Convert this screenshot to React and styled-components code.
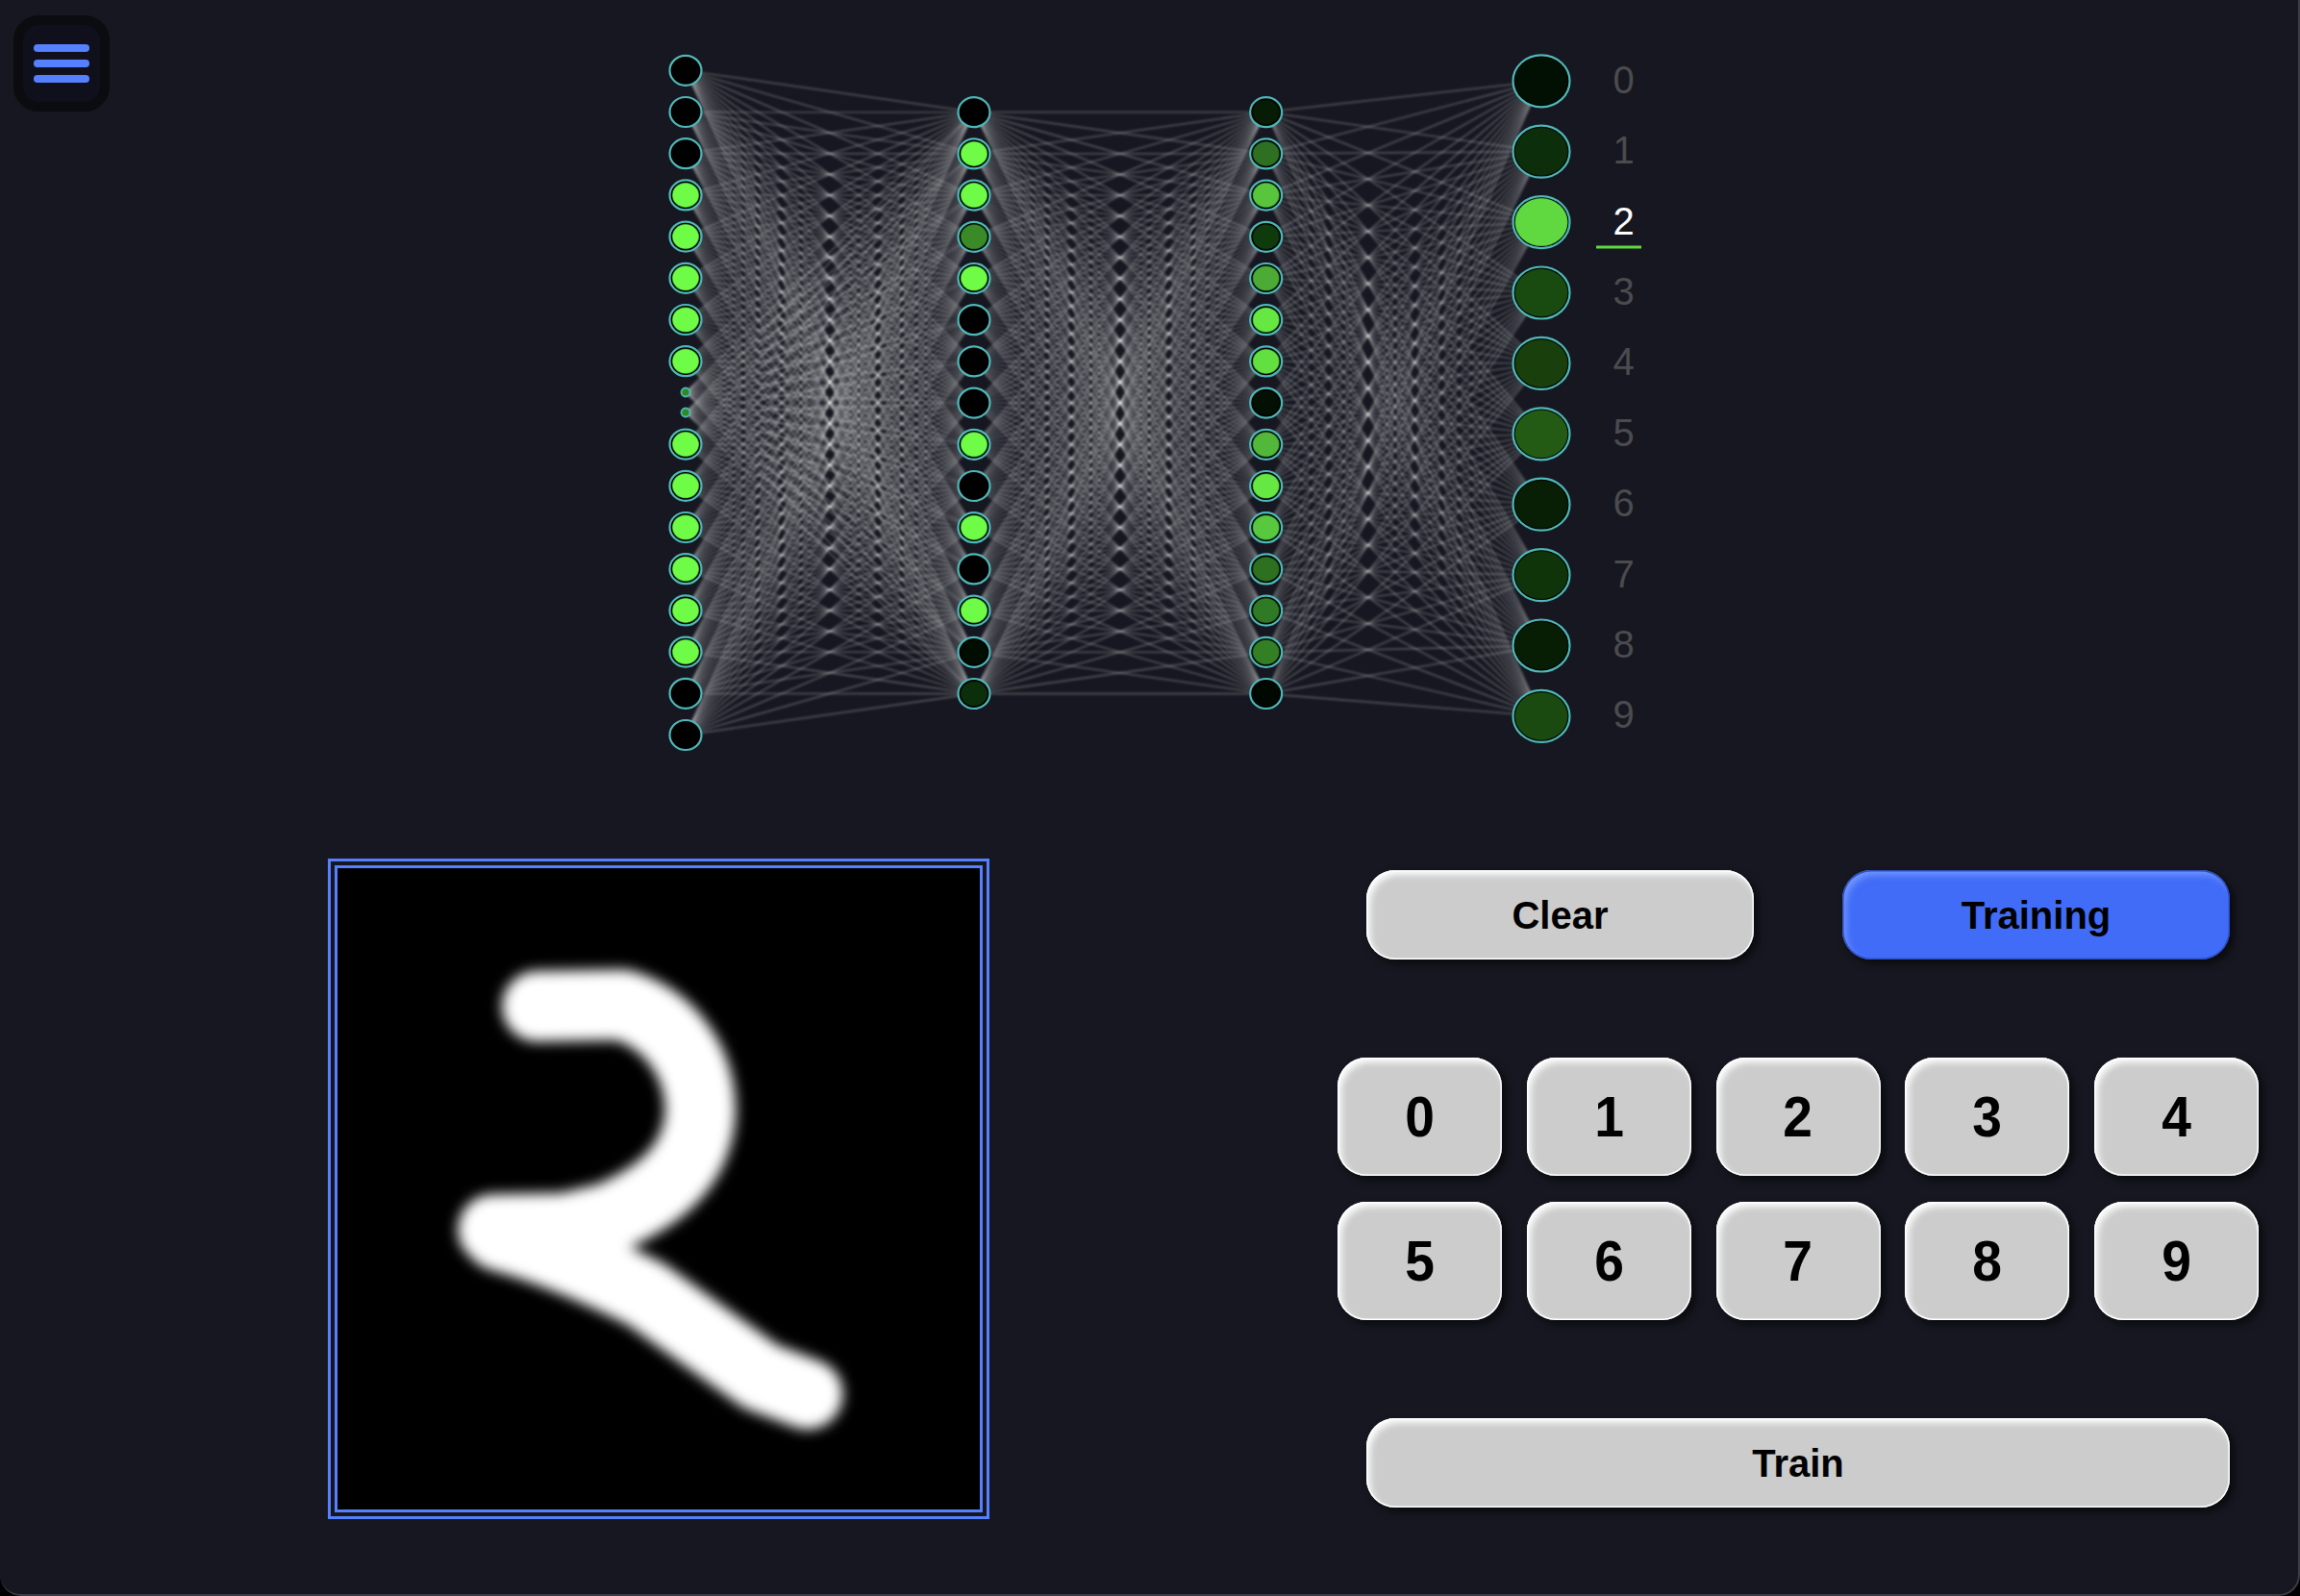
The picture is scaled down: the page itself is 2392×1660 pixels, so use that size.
import React from 'react';
import styled, { createGlobalStyle } from 'styled-components';

const GREEN = '#6ffc46';
const K = '#000000';

const inputColors = [K, K, K, GREEN, GREEN, GREEN, GREEN, GREEN, GREEN, GREEN, GREEN, GREEN, GREEN, GREEN, K, K];
const hiddenOne = [K, GREEN, GREEN, '#3a8a28', GREEN, K, K, K, GREEN, K, GREEN, K, GREEN, '#020d02', '#0b2f0a'];
const hiddenTwo = ['#071c05', '#2f6f22', '#58c53d', '#0f3a0c', '#4cab35', '#66e843', '#62e040', '#031003', '#52b83a', '#66e843', '#58c93e', '#2c7020', '#2f7a24', '#338024', '#010801'];
const outputColors = ['#021003', '#0d2e0b', '#60d940', '#194a10', '#183f0c', '#235b15', '#081f05', '#103409', '#071e04', '#1b4a10'];

const STEP = 43.2;
const inputNodes = inputColors.map((fill, i) => ({
  x: 713,
  y: 73.3 + (i < 8 ? i : i + 1) * STEP,
  fill,
}));
const hiddenOneNodes = hiddenOne.map((fill, i) => ({ x: 1013, y: 116.7 + i * STEP, fill }));
const hiddenTwoNodes = hiddenTwo.map((fill, i) => ({ x: 1316.7, y: 116.7 + i * STEP, fill }));
const outputNodes = outputColors.map((fill, i) => ({ x: 1603, y: 84.3 + i * 73.4, fill }));

const dotNodes = [408, 429].map((y) => ({ x: 713, y }));

const layerPairs = [
  [[...inputNodes, ...dotNodes], hiddenOneNodes],
  [hiddenOneNodes, hiddenTwoNodes],
  [hiddenTwoNodes, outputNodes],
];

const Network = () => (
  <NetworkSvg viewBox="680 40 1040 760">
    <defs>
      <filter id="wire" filterUnits="userSpaceOnUse" x="680" y="40" width="1040" height="760">
        <feGaussianBlur stdDeviation="0.8" />
      </filter>
    </defs>
    <g stroke="#ffffff" strokeOpacity="0.23" strokeWidth="1.8" filter="url(#wire)">
      {layerPairs.map(([from, to], p) =>
        from.map((a, i) =>
          to.map((b, j) => <line key={`${p}-${i}-${j}`} x1={a.x} y1={a.y} x2={b.x} y2={b.y} />)
        )
      )}
    </g>
    {[inputNodes, hiddenOneNodes, hiddenTwoNodes].map((layer) =>
      layer.map((n) => (
        <g key={`${n.x}-${n.y}`}>
          <ellipse cx={n.x} cy={n.y} rx="16.5" ry="15.5" fill="#000" stroke="#4fb8b8" strokeWidth="2.2" />
          <ellipse cx={n.x} cy={n.y} rx="14" ry="13" fill={n.fill} stroke="#000" strokeOpacity="0.3" strokeWidth="1.5" />
        </g>
      ))
    )}
    {dotNodes.map((n) => (
      <circle key={n.y} cx={n.x} cy={n.y} r="4.5" fill="#2f8a24" stroke="#4fb8b8" strokeWidth="1.8" />
    ))}
    {outputNodes.map((n, i) => (
      <g key={i}>
        <ellipse cx={n.x} cy={n.y} rx="29.5" ry="27" fill="#000" stroke="#4fb8b8" strokeWidth="2.2" />
        <ellipse cx={n.x} cy={n.y} rx="27.5" ry="25" fill={n.fill} stroke="#000" strokeOpacity="0.25" strokeWidth="1" />
        <OutputLabel x="1688.7" y={n.y + 12.5} $active={i === 2}>{i}</OutputLabel>
      </g>
    ))}
    <rect x="1660" y="255.5" width="47" height="3" fill="#62d93f" />
  </NetworkSvg>
);

const App = () => {
  return (
    <>
      <GlobalStyle />
      <Page>
        <Top>
          <MenuButton>
            <MenuBar />
            <MenuBar />
            <MenuBar />
          </MenuButton>
          <Network />
        </Top>
        <Bottom>
          <DrawFrame>
            <DigitSvg viewBox="230 592 437.3 436.5">
              <defs>
                <filter id="soft" filterUnits="userSpaceOnUse" x="230" y="592" width="437.3" height="436.5">
                  <feGaussianBlur stdDeviation="4.5" />
                </filter>
              </defs>
              <g filter="url(#soft)" fill="none" stroke="#fff" strokeWidth="48" strokeLinecap="round" strokeLinejoin="round">
                <path d="M 366 686 L 424 685 C 457 695 478 725 477 760 C 474 795 450 815 415 830 L 385 837 L 336 838" />
                <path d="M 340 842 C 370 850 400 862 440 882 L 518 938 L 550 950" />
              </g>
            </DigitSvg>
          </DrawFrame>
          <Controls>
            <ActionRow>
              <ActionButton>Clear</ActionButton>
              <ActionButton $active>Training</ActionButton>
            </ActionRow>
            <DigitGrid>
              {[0, 1, 2, 3, 4, 5, 6, 7, 8, 9].map((d) => (
                <DigitButton key={d}><DigitGlyph>{d}</DigitGlyph></DigitButton>
              ))}
            </DigitGrid>
            <TrainRow>
              <TrainButton>Train</TrainButton>
            </TrainRow>
          </Controls>
        </Bottom>
      </Page>
    </>
  );
};

const GlobalStyle = createGlobalStyle`
  html, body {
    margin: 0;
    padding: 0;
    background: #000;
  }
`;

const Page = styled.div`
  width: 2392px;
  height: 1660px;
  box-sizing: border-box;
  background: #161720;
  border-right: 2px solid #3c3d45;
  border-bottom: 2px solid #3c3d45;
  border-radius: 0 0 22px 22px;
  font-family: "Liberation Sans", Arial, sans-serif;
  overflow: hidden;
`;

const Top = styled.div`
  display: flex;
  align-items: flex-start;
  height: 893px;
`;

const MenuButton = styled.div`
  width: 100px;
  height: 100px;
  box-sizing: border-box;
  margin: 16px 0 0 14px;
  border: 10px solid #0b0b10;
  border-radius: 26px;
  background: #10101c;
  display: flex;
  flex-direction: column;
  justify-content: center;
  align-items: center;
  gap: 8px;
`;

const MenuBar = styled.span`
  display: block;
  width: 58px;
  height: 8px;
  border-radius: 4px;
  background: #5580ff;
`;

const NetworkSvg = styled.svg`
  display: block;
  flex: none;
  width: 1040px;
  height: 760px;
  margin: 40px 0 0 566px;
`;

const OutputLabel = styled.text`
  font-family: "Liberation Sans", Arial, sans-serif;
  font-size: 40px;
  text-anchor: middle;
  fill: ${(p) => (p.$active ? '#ffffff' : '#4b4b4f')};
`;

const Bottom = styled.div`
  display: flex;
  align-items: flex-start;
  padding-left: 341px;
  gap: 362px;
`;

const DrawFrame = styled.div`
  width: 688px;
  height: 687px;
  box-sizing: border-box;
  border: 10px double #5580ff;
  background: #000;
  background-clip: padding-box;
`;

const DigitSvg = styled.svg`
  display: block;
  width: 100%;
  height: 100%;
`;

const Controls = styled.div`
  width: 959px;
  padding-top: 12px;
  display: flex;
  flex-direction: column;
  gap: 102px;
`;

const ActionRow = styled.div`
  display: flex;
  justify-content: space-between;
  padding: 0 31px 0 30px;
`;

const TrainRow = styled.div`
  padding: 0 31px 0 30px;
`;

const RaisedButton = styled.button`
  display: block;
  box-sizing: border-box;
  border: none;
  padding: 2px 0 0;
  font-family: "Liberation Sans", Arial, sans-serif;
  font-weight: 700;
  color: #000;
  background: ${(p) => (p.$active ? '#416cf8' : '#cccccc')};
  box-shadow: ${(p) =>
    p.$active
      ? 'inset 0 0 0 1.5px #2c4fc4, inset 4px 5px 7px rgba(150, 180, 255, 0.6), 4px 4px 8px rgba(0, 0, 0, 0.6)'
      : 'inset 0 0 0 1.5px #ffffff, inset 4px 5px 7px rgba(255, 255, 255, 0.95), 4px 4px 8px rgba(0, 0, 0, 0.6)'};
`;

const ActionButton = styled(RaisedButton)`
  width: 403px;
  height: 93px;
  border-radius: 30px;
  font-size: 40px;
`;

const TrainButton = styled(RaisedButton)`
  width: 100%;
  height: 93px;
  border-radius: 30px;
  font-size: 40px;
`;

const DigitGrid = styled.div`
  display: grid;
  grid-template-columns: repeat(5, 171px);
  grid-auto-rows: 123px;
  column-gap: 25.75px;
  row-gap: 27px;
`;

const DigitButton = styled(RaisedButton)`
  padding: 0;
  border-radius: 30px;
  font-size: 60px;
`;

const DigitGlyph = styled.span`
  display: inline-block;
  transform: scaleX(0.92);
`;

export default App;
